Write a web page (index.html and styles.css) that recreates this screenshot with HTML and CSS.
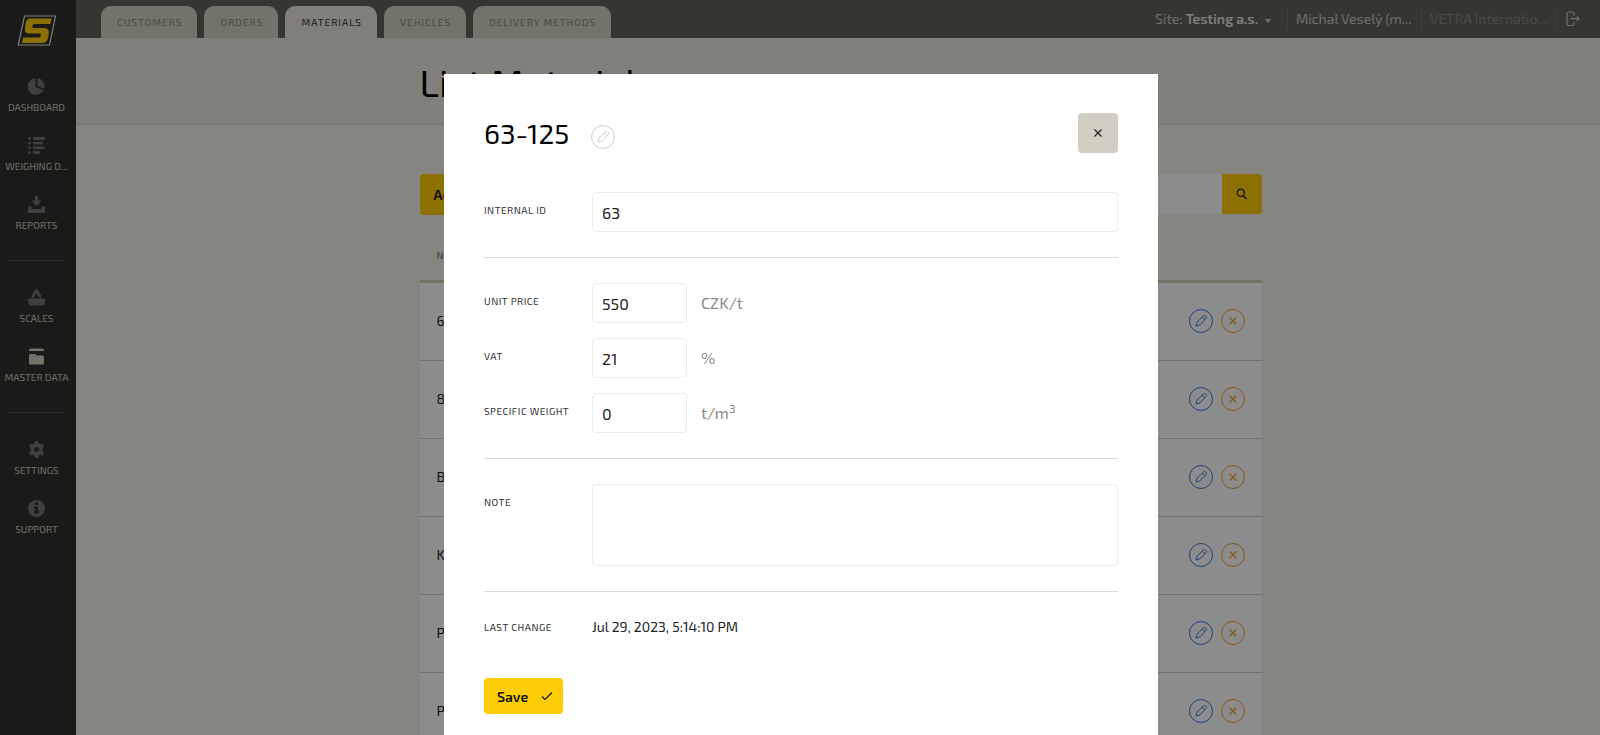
FILE: index.html
```html
<!DOCTYPE html>
<html lang="en">
<head>
  <meta charset="UTF-8">
  <title>List Materials</title>
  <meta name="viewport" content="width=device-width, initial-scale=1.0">
  <link rel="stylesheet" href="styles.css">
</head>
<body>

<!-- shared icons -->
<svg class="sprite" aria-hidden="true">
  <symbol id="i-pencil" viewBox="0 0 14 14">
    <path d="M2 12l1-3.800L9.500 1.900a1.300 1.300 0 0 1 1.900 0l.7.7a1.300 1.300 0 0 1 0 1.900L5.700 11 2 12zM8.300 3.200l2.500 2.500" fill="none" stroke="currentColor" stroke-linejoin="round"/>
  </symbol>
  <symbol id="i-cross" viewBox="0 0 14 14">
    <path d="M3.500 3.500l7 7M10.500 3.500l-7 7" fill="none" stroke="currentColor" stroke-width="1.200"/>
  </symbol>
</svg>

<div class="layout">
  <aside class="sidebar">
    <a href="#" class="logo" aria-label="Home">
      <svg width="40" height="32" viewBox="0 0 40 32">
        <path d="M7.500 1H38.500L32.500 30H1.200z" fill="none" stroke="#e4e4e4" stroke-width="1.200"/>
        <path d="M13 3.500H34.700L33.300 9H17.500Q15.600 9 15.300 11T16.500 13H27Q32.500 13 31.800 18.500L31 23Q30 28 25 28H5L6.300 22.500H21.500Q23.500 22.500 23.800 20.600T22.300 18.500H12Q7.300 18.500 8 13.500L8.500 9Q9.300 3.500 13 3.500z" fill="#ffcd07"/>
      </svg>
    </a>
    <nav class="menu">
      <a href="#">
        <svg width="17" height="17" viewBox="0 0 17 17"><path d="M7.500 0.100V9l8 3.300A8.400 8.400 0 1 1 7.500.1zM9.500 0a8.500 8.500 0 0 1 6.800 10.500L9.500 8z" fill="currentColor"/></svg>
        <span>DASHBOARD</span>
      </a>
      <a href="#">
        <svg width="17" height="17" viewBox="0 0 17 17"><path d="M1.500 1.500h0M1.500 6.200h0M1.500 10.800h0M1.500 15.500h0M6.300 1.500h9.200M6.300 6.200h7.200M6.300 10.800h9.200M6.300 15.500h4.500" fill="none" stroke="currentColor" stroke-width="2.800" stroke-linecap="round"/></svg>
        <span>WEIGHING D...</span>
      </a>
      <a href="#">
        <svg width="17" height="17" viewBox="0 0 17 17"><path d="M7 0h3v4.500h3.500L8.500 10 3.500 4.500H7zM0 11.500q0-1 1-1h2.500v2.500h10v-2.500H16q1 0 1 1V16q0 1-1 1H1q-1 0-1-1z" fill="currentColor"/></svg>
        <span>REPORTS</span>
      </a>
      <hr>
      <a href="#">
        <svg width="17" height="17" viewBox="0 0 17 17"><path d="M0 10.500q0-1 1-1h15q1 0 1 1v2q0 4-4 4H4q-4 0-4-4z" fill="currentColor"/><path d="M4.800 7.500L8.500 1.300l3.700 6.200" fill="none" stroke="currentColor" stroke-width="2.600" stroke-linejoin="round" stroke-linecap="round"/></svg>
        <span>SCALES</span>
      </a>
      <a href="#" class="active">
        <svg width="17" height="17" viewBox="0 0 17 17"><path d="M1 3V2.200Q1 .5 3 .5h11q2 0 2 1.700V3zM1 7.500Q1 6 2.500 6h4q1.500 0 2 1.500h6q1.500 0 1.500 1.500v6q0 1.500-1.500 1.500h-12Q1 16.500 1 15z" fill="currentColor"/></svg>
        <span>MASTER DATA</span>
      </a>
      <hr>
      <a href="#">
        <svg width="17" height="17" viewBox="0 0 17 17"><path fill-rule="evenodd" d="M7 0h3l.6 2.400 1.600.9L14.500 2.600l1.600 2.700-1.700 1.800v2.800l1.700 1.800-1.600 2.700-2.300-.7-1.600.9L10 17H7l-.6-2.400-1.600-.9-2.300.7-1.600-2.700 1.700-1.800V7.100L.9 5.300l1.600-2.700 2.300.7 1.600-.9zM8.500 6a2.500 2.500 0 1 0 0 5 2.500 2.500 0 0 0 0-5z" fill="currentColor"/></svg>
        <span>SETTINGS</span>
      </a>
      <a href="#">
        <svg width="17" height="17" viewBox="0 0 17 17"><path fill-rule="evenodd" d="M8.500 0a8.500 8.500 0 1 0 0 17 8.500 8.500 0 0 0 0-17zM7 2.500h3v2.500H7zM6 6.500h4v5h1.200v2H6v-2h1.200v-3H6z" fill="currentColor"/></svg>
        <span>SUPPORT</span>
      </a>
    </nav>
  </aside>

  <div class="page">
    <header class="topbar">
      <nav class="tabs">
        <a href="#">CUSTOMERS</a>
        <a href="#">ORDERS</a>
        <a href="#" class="active">MATERIALS</a>
        <a href="#">VEHICLES</a>
        <a href="#">DELIVERY METHODS</a>
      </nav>
      <div class="user">
        <button class="site">Site: <b>Testing a.s.</b><i class="caret"></i></button>
        <span class="user-name">Michal Veselý (m...</span>
        <span class="user-company">VETRA Internatio...</span>
        <a href="#" class="logout" aria-label="Log out">
          <svg width="14" height="16" viewBox="0 0 14 16"><path d="M8 4.500V2.500Q8 1 6.500 1h-4Q1 1 1 2.500v10.500Q1 14.500 2.500 14.500h4Q8 14.500 8 13v-2M4.500 7.700H13M10.500 5.200L13 7.700l-2.500 2.500" fill="none" stroke="currentColor" stroke-width="1.200"/></svg>
        </a>
      </div>
    </header>

    <div class="heading">
      <div class="container"><h1>List Materials</h1></div>
    </div>

    <main class="container">
      <div class="tools">
        <button class="btn btn-add">Add material</button>
        <form class="search">
          <input type="text" aria-label="Search">
          <button type="button" aria-label="Search">
            <svg width="12" height="12" viewBox="0 0 12 12"><path d="M7 7.500l3.500 3.500" stroke="currentColor" stroke-width="1.400"/><circle cx="4.800" cy="4.800" r="3.600" fill="none" stroke="currentColor" stroke-width="1.200"/></svg>
          </button>
        </form>
      </div>
      <table class="list">
        <thead>
          <tr><th>NAME</th><th></th></tr>
        </thead>
        <tbody id="rows"></tbody>
      </table>
    </main>
  </div>
</div>

<div class="overlay">
  <form class="modal" role="dialog" aria-labelledby="modal-title">
    <div class="modal-head">
      <h2 id="modal-title">63-125</h2>
      <button type="button" class="round rename" aria-label="Rename"><svg width="14" height="14"><use href="#i-pencil"/></svg></button>
      <button type="button" class="close" aria-label="Close"><svg width="14" height="14"><use href="#i-cross"/></svg></button>
    </div>

    <div class="field">
      <label for="internal-id">INTERNAL ID</label>
      <input type="text" id="internal-id" value="63">
    </div>
    <hr>
    <div class="field">
      <label for="price">UNIT PRICE</label>
      <input type="text" id="price" class="short" value="550">
      <span class="unit">CZK/t</span>
    </div>
    <div class="field">
      <label for="vat">VAT</label>
      <input type="text" id="vat" class="short" value="21">
      <span class="unit">%</span>
    </div>
    <div class="field">
      <label for="weight">SPECIFIC WEIGHT</label>
      <input type="text" id="weight" class="short" value="0">
      <span class="unit">t/m<sup>3</sup></span>
    </div>
    <hr>
    <div class="field">
      <label for="note">NOTE</label>
      <textarea id="note"></textarea>
    </div>
    <hr>
    <div class="field info">
      <span class="label">LAST CHANGE</span>
      <span class="value">Jul 29, 2023, 5:14:10 PM</span>
    </div>
    <button type="button" class="btn btn-save">Save
      <svg width="12" height="10" viewBox="0 0 12 10"><path d="M1 5.500L4 8.500 11 1.500" fill="none" stroke="currentColor" stroke-width="1.200"/></svg>
    </button>
  </form>
</div>

<script>
  const materials = ['63-125', '8-16', 'Beton', 'Kamenivo', 'Písek', 'Prosívka'];

  document.getElementById('rows').innerHTML = materials.map(name => `
    <tr>
      <td>${name}</td>
      <td class="actions">
        <button class="round edit" aria-label="Edit"><svg width="14" height="14"><use href="#i-pencil"/></svg></button>
        <button class="round remove" aria-label="Delete"><svg width="14" height="14"><use href="#i-cross"/></svg></button>
      </td>
    </tr>`).join('');
</script>

</body>
</html>
```

FILE: styles.css
```css
* { box-sizing: border-box; }
body { margin: 0; height: 100vh; overflow: hidden; background: #f4f1e8; color: #222; font-family: "Exo 2", Roboto, sans-serif; font-size: 14px; }
button, input, textarea { font: inherit; color: inherit; }
button { padding: 0; border: 0; background: none; cursor: pointer; }
a { color: inherit; text-decoration: none; }
svg { display: block; flex: none; }
.sprite { position: absolute; width: 0; height: 0; }
.layout { display: flex; min-height: 100vh; }

/* sidebar */
.sidebar { flex: none; width: 76px; padding: 15px 3px 0 0; background: #31312d; color: #c8c8bb; }
.logo { display: block; width: 40px; margin: 0 auto; }
.menu { display: flex; flex-direction: column; padding-top: 31px; }
.menu a { display: flex; flex-direction: column; align-items: center; gap: 5px; height: 59px; font-size: 10px; line-height: 14px; }
.menu svg { color: #73736f; }
.menu .active svg { color: #d1d1c1; }
.menu span { white-space: nowrap; }
.menu hr { width: 60px; height: 1px; margin: 5px auto 28px; border: 0; background: #484844; }

/* top bar */
.page { flex: 1; min-width: 0; }
.topbar { display: flex; justify-content: space-between; height: 38px; padding: 0 20px 0 25px; background: #626259; }
.tabs { display: flex; align-items: flex-end; gap: 7px; }
.tabs a { height: 32px; padding: 0 15px 0 16px; border-radius: 10px 10px 0 0; background: #d1d1c1; color: #888882; font-size: 10px; line-height: 32px; letter-spacing: 1px; }
.tabs .active { background: #ebe7dc; color: #333; }
.user { display: flex; align-items: center; height: 38px; color: #c8c8bb; }
.user > * { height: 24px; line-height: 24px; }
.site { margin-right: 16px; white-space: nowrap; }
.site b { font-weight: 600; color: #e6e6e0; }
.caret { display: inline-block; margin-left: 7px; border: 3px solid transparent; border-top: 4px solid #d1d1c1; border-bottom: 0; vertical-align: middle; }
.user-name, .user-company { width: 134px; padding-left: 8px; border-left: 1px solid #70706a; white-space: nowrap; }
.user-company { color: #88887f; }
.logout { display: flex; align-items: center; padding-left: 10px; border-left: 1px solid #70706a; }

/* list */
.container { width: 847px; margin: 0 auto; padding-left: 5px; }
.heading { height: 87px; border-bottom: 1px solid #d8d5cb; background: #ebe7dc; }
h1 { margin: 0; padding-top: 19px; font-size: 38px; font-weight: 400; line-height: 50px; color: #000; }
.tools { display: flex; justify-content: space-between; padding-top: 49px; }
.btn { border-radius: 4px; background: #ffcd07; color: #111; font-weight: 600; }
.btn-add { height: 41px; padding: 0 14px; }
.search { display: flex; height: 40px; }
.search input { width: 300px; padding: 0 10px; border: 0; border-radius: 4px 0 0 4px; background: #fff; }
.search button { display: grid; place-items: center; width: 40px; border-radius: 0 4px 4px 0; background: #ffcd07; }
.list { width: 100%; margin-top: 15px; border-collapse: separate; border-spacing: 0; }
.list th { height: 53px; padding: 0 17px; border-bottom: 3px solid #d1d1c1; font-size: 10px; font-weight: 400; letter-spacing: 1px; text-align: left; color: #777; }
.list td { height: 78px; padding: 0 17px 2px; border-bottom: 1px solid #d1d1c1; background: #fff; }
.list .actions { text-align: right; }
.round { display: inline-grid; place-items: center; width: 24px; height: 24px; border: 1px solid #d1cfc1; border-radius: 50%; color: #d1cfc1; vertical-align: middle; }
.edit { border-color: #347dd2; color: #347dd2; }
.remove { margin-left: 4px; border-color: #f0a030; color: #f0a030; }

/* modal */
.overlay { position: fixed; inset: 0; padding: 74px 0 0 2px; overflow: hidden; background: rgba(0, 0, 0, .45); }
.modal { width: 714px; min-height: 100%; margin: 0 auto; padding: 39px 40px; background: #fff; }
.modal-head { display: flex; align-items: center; gap: 22px; height: 40px; margin-bottom: 39px; }
h2 { margin: 0; font-size: 28px; font-weight: 400; color: #000; }
.rename { margin-top: 8px; }
.close { display: grid; place-items: center; width: 40px; height: 40px; margin-left: auto; border-radius: 4px; background: #d1cfc1; }
.field { display: flex; align-items: flex-start; min-height: 40px; margin-bottom: 15px; }
.field label, .field .label { flex: none; width: 108px; font-size: 10px; line-height: 36px; letter-spacing: .05em; color: #333; }
.field input, .field textarea { flex: 1; min-width: 0; height: 40px; padding: 0 9px; border: 1px solid #eeede2; border-radius: 4px; background: #fff; font-size: 16px; outline: 0; }
.field textarea { height: 82px; resize: none; }
.field .short { flex: none; width: 95px; }
.unit { margin-left: 14px; font-size: 16px; line-height: 40px; color: #888; }
.unit sup { font-size: 12px; line-height: 0; }
.info .label, .value { line-height: 20px; }
.modal hr { height: 1px; margin: 25px 0; border: 0; background: #dddbd2; }
.btn-save { display: flex; align-items: center; justify-content: space-between; width: 79px; height: 36px; margin-top: 21px; padding: 0 10px 0 13px; }
```
